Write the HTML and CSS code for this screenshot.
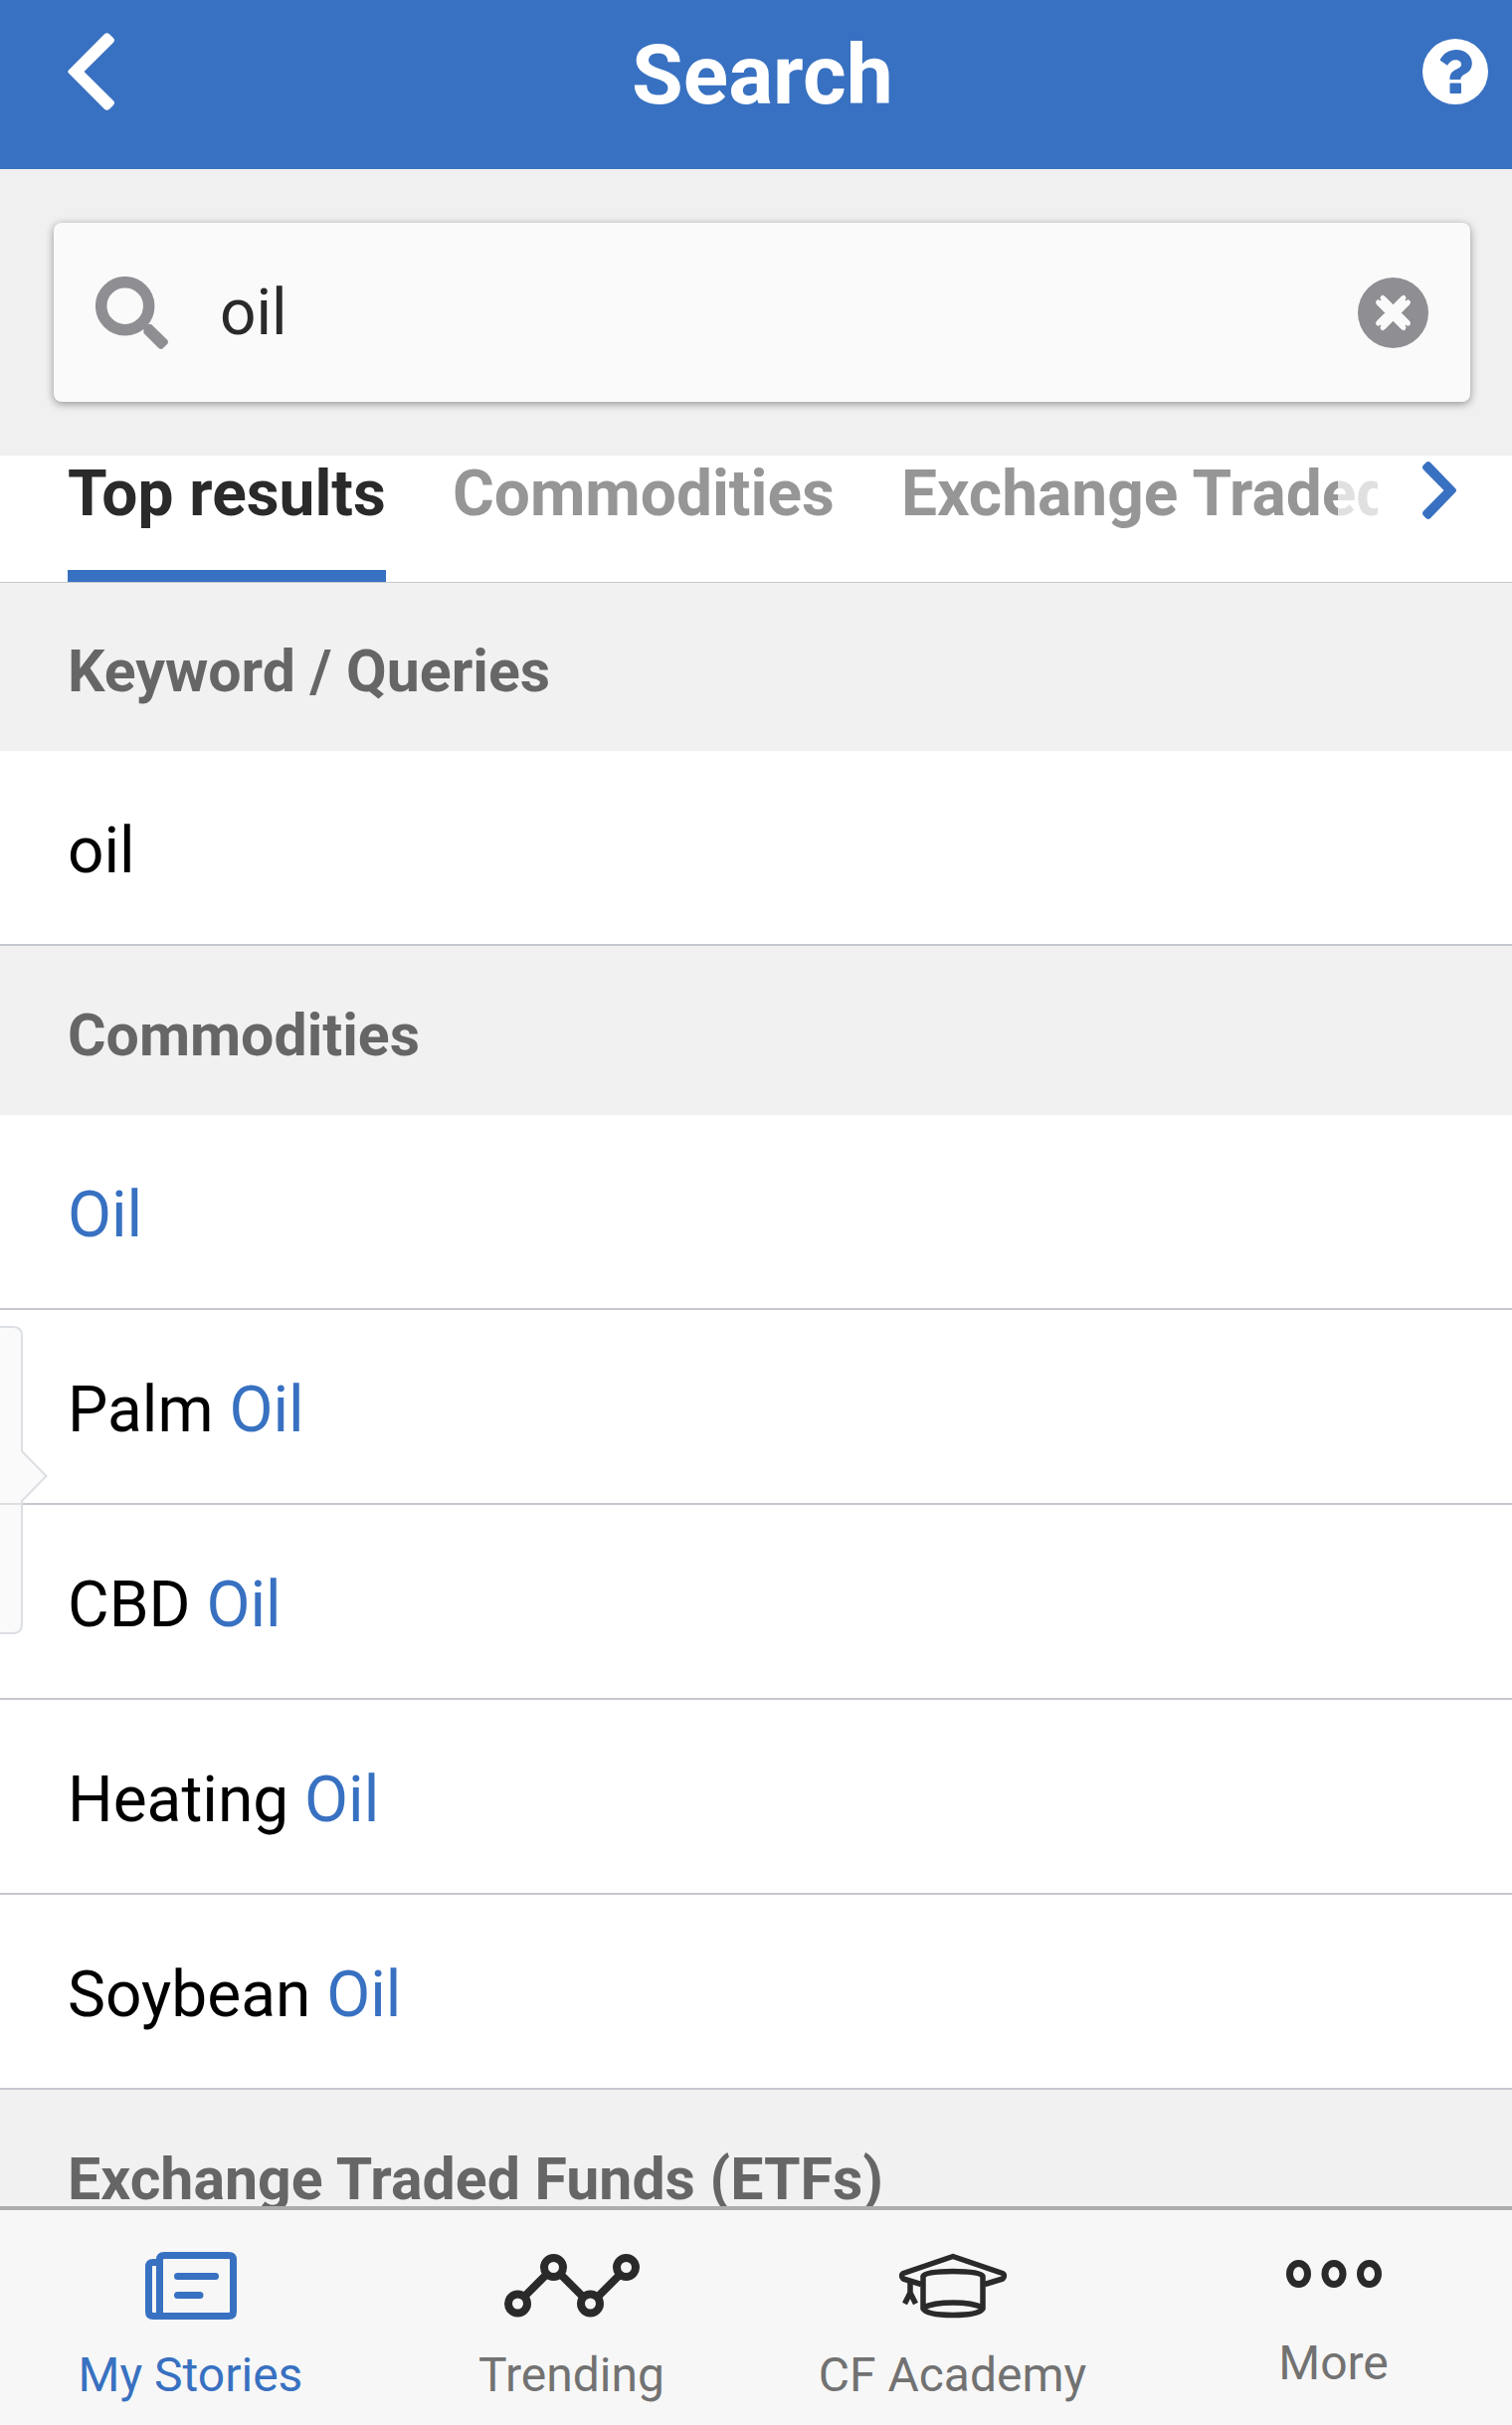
FILE: index.html
```html
<!DOCTYPE html>
<html lang="en">
<head>
    <meta charset="UTF-8">
    <meta name="viewport" content="width=device-width, initial-scale=1.0">
    <title>Search</title>
    <link rel="stylesheet" href="styles.css">
</head>
<body>
    <header class="header">
        <button class="icon-btn" aria-label="Back">
            <svg width="47" height="78" viewBox="0 0 47 78">
                <path d="M1 37.500 L37 1.300 Q39.500 -1 42 1.300 L46 5.300 Q48 7.500 46 9.700 L16.500 39 L46 68.300 Q48 70.500 46 72.700 L42 76.700 Q39.500 79 37 76.700 L1 40.500 Q-0.500 39 1 37.500 Z" fill="#fff"/>
            </svg>
        </button>
        <h1 class="header-title">Search</h1>
        <button class="icon-btn" aria-label="Help">
            <svg width="66" height="66" viewBox="0 0 66 66">
                <circle cx="33" cy="33" r="33" fill="#fff"/>
                <path d="M17.500 21.500 C21 14.500 26.500 11 34 11 C43 11 49.800 17 49.800 24.500 C49.800 30 47 33.200 43 35.300 C39.500 37.200 38.800 38.500 38.300 41 L27.500 41 C27.200 35.500 29.500 33 34 30.800 C37.500 29 39 28 39 25.700 C39 23 36.500 21.300 33.500 21.300 C29.800 21.300 28 22.800 25 26.800 Z" fill="#3871c1"/>
                <rect x="27.500" y="44.500" width="11.500" height="10.500" rx="1" fill="#3871c1"/>
            </svg>
        </button>
    </header>

    <form class="search" role="search">
        <label class="search-box">
            <svg width="73" height="73" viewBox="0 0 73 73" aria-hidden="true">
                <circle cx="29.700" cy="29.700" r="24" fill="none" stroke="#8f8e93" stroke-width="11.500"/>
                <path d="M48 50 Q48 48 51 48 L56 48 L72 63.500 Q74 66 72 68 L68 72 Q66 74 63.500 72 L48.500 57 Z" fill="#8f8e93"/>
            </svg>
            <input class="search-input" type="text" value="oil" aria-label="Search">
            <button class="icon-btn" type="reset" aria-label="Clear search">
                <svg width="71" height="71" viewBox="0 0 71 71">
                    <circle cx="35.500" cy="35.500" r="35.500" fill="#8f8e93"/>
                    <path d="M23 23 L48 48 M48 23 L23 48" stroke="#fafafa" stroke-width="11.500"/>
                    <path d="M25 20.500 L50.500 46 M46 20.500 L20.500 46 M20.500 25 L46 50.500 M50.500 25 L25 50.500" stroke="#fafafa" stroke-width="5" stroke-linecap="round"/>
                </svg>
            </button>
        </label>
    </form>

    <div class="tabs">
        <div class="tabs-list" role="tablist">
            <button class="tab active" role="tab" aria-selected="true">Top results</button>
            <button class="tab" role="tab" aria-selected="false">Commodities</button>
            <button class="tab" role="tab" aria-selected="false">Exchange Traded Funds (ETFs)</button>
        </div>
        <button class="icon-btn tabs-next" aria-label="More tabs">
            <svg width="34" height="58" viewBox="0 0 34 58">
                <path d="M33.500 27.500 L8 1 Q5.800 -0.800 3.600 1 L0.800 3.800 Q-0.800 6 0.800 8 L21.500 29 L0.800 50 Q-0.800 52 0.800 54.200 L3.600 57 Q5.800 58.800 8 57 L33.500 30.500 Q34.500 29 33.500 27.500 Z" fill="#3871c1"/>
            </svg>
        </button>
    </div>

    <main class="results">
        <h2 class="section-title">Keyword / Queries</h2>
        <ul class="list">
            <li><a class="row" href="#">oil</a></li>
        </ul>

        <h2 class="section-title">Commodities</h2>
        <ul class="list">
            <li><a class="row" href="#"><span class="match">Oil</span></a></li>
            <li class="with-callout">
                <a class="row" href="#">Palm <span class="match">Oil</span></a>
                <svg class="callout" width="50" height="310" viewBox="0 0 50 310" aria-hidden="true">
                    <path d="M-10 1 H13 Q22 1 22 10 V126 L46.500 151 L22 176 V299 Q22 309 13 309 H-10 Z" fill="#f5f5f6" fill-opacity="0.500" stroke="#dcdfe3" stroke-width="2"/>
                </svg>
            </li>
            <li><a class="row" href="#">CBD <span class="match">Oil</span></a></li>
            <li><a class="row" href="#">Heating <span class="match">Oil</span></a></li>
            <li><a class="row" href="#">Soybean <span class="match">Oil</span></a></li>
        </ul>

        <h2 class="section-title">Exchange Traded Funds (ETFs)</h2>
    </main>

    <nav class="bottom-nav">
        <a class="nav-item active" href="#">
            <svg width="92" height="72" viewBox="0 0 92 72" fill="none" stroke="#3871c1" stroke-width="7" stroke-linecap="round">
                <path d="M14.500 66.500 V10 Q14.500 5.500 19 5.500 H84 Q88.500 5.500 88.500 10 V62 Q88.500 66.500 84 66.500 H8 Q3.500 66.500 3.500 62 V17 Q3.500 12.500 8 12.500 H12"/>
                <path d="M32.500 26.500 H70.500 M32.500 45.500 H55"/>
            </svg>
            <span>My Stories</span>
        </a>
        <a class="nav-item" href="#">
            <svg width="136" height="72" viewBox="0 0 136 72" fill="none" stroke="#2a2a2a" stroke-width="8">
                <path d="M20 47 L42 25 M57 25 L79 47 M94 47 L116 25"/>
                <circle cx="13.500" cy="54" r="9.500"/>
                <circle cx="49.500" cy="17.500" r="9.500"/>
                <circle cx="86.500" cy="54" r="9.500"/>
                <circle cx="122.500" cy="17.500" r="9.500"/>
            </svg>
            <span>Trending</span>
        </a>
        <a class="nav-item" href="#">
            <svg width="108" height="72" viewBox="0 -4 108 72" fill="none" stroke="#2a2a2a" stroke-width="5.500" stroke-linejoin="round">
                <path d="M22 30.500 L4 25 Q1 21.500 4 19.500 L54 2.500 L104 19.500 Q107 21.500 104 25 L86 30.500"/>
                <path d="M24 55 V22.500 Q27 17.500 54 17.500 Q81 17.500 84 22.500 V55 Q80 61.500 54 61.500 Q28 61.500 24 55 Z"/>
                <path d="M24 54 Q34 49 54 49 Q74 49 84 54"/>
                <path d="M11 27 V39 L5.500 50 M11 39 L16.500 50"/>
            </svg>
            <span>CF Academy</span>
        </a>
        <a class="nav-item" href="#">
            <svg width="96" height="60" viewBox="0 0 96 60" fill="none" stroke="#2a2a2a" stroke-width="7">
                <ellipse cx="12.500" cy="24" rx="9" ry="10.500"/>
                <ellipse cx="48" cy="24" rx="9" ry="10.500"/>
                <ellipse cx="83.500" cy="24" rx="9" ry="10.500"/>
            </svg>
            <span>More</span>
        </a>
    </nav>
</body>
</html>
```
FILE: styles.css
```css
* {
    margin: 0;
    padding: 0;
    box-sizing: border-box;
}

body {
    height: 100vh;
    display: flex;
    flex-direction: column;
    background: #fff;
    color: #000;
    font-family: Roboto, sans-serif;
    overflow: hidden;
}

svg {
    display: block;
}

a {
    color: inherit;
    text-decoration: none;
}

.icon-btn {
    flex: none;
    background: none;
    border: none;
    cursor: pointer;
}

/* Header */
.header {
    flex: none;
    display: flex;
    align-items: center;
    padding: 22px 24px 48px 68px;
    background: #3871c1;
}

.header-title {
    flex: 1;
    padding: 8px 12px 0 0;
    color: #fff;
    font-size: 84px;
    font-weight: 700;
    line-height: 92px;
    text-align: center;
}

/* Search field */
.search {
    flex: none;
    padding: 54px 42px 54px 54px;
    background: #f0f0f0;
}

.search-box {
    display: flex;
    align-items: center;
    height: 180px;
    padding: 0 42px;
    background: #fafafa;
    border-radius: 8px;
    box-shadow: 0 2px 8px rgba(0, 0, 0, 0.4);
}

.search-input {
    flex: 1;
    min-width: 0;
    margin-left: 52px;
    padding-top: 2px;
    background: none;
    border: none;
    outline: none;
    color: #2a2a2a;
    font-family: inherit;
    font-size: 64px;
    line-height: 76px;
}

/* Tabs */
.tabs {
    flex: none;
    position: relative;
    z-index: 1;
    display: flex;
    align-items: flex-start;
    padding: 0 56px 0 68px;
    background: #fff;
    box-shadow: 0 1px 0 #c5c8ce;
}

.tabs-list {
    flex: 1;
    position: relative;
    display: flex;
    gap: 67px;
    min-width: 0;
    overflow: hidden;
}

.tabs-list::after {
    content: "";
    position: absolute;
    top: 0;
    right: 0;
    bottom: 0;
    width: 40px;
    background: rgba(255, 255, 255, 0.7);
}

.tab {
    flex: none;
    padding: 1px 0 38px;
    background: none;
    border: none;
    border-bottom: 12px solid transparent;
    color: #969696;
    font-family: inherit;
    font-size: 64px;
    font-weight: 700;
    line-height: 76px;
    white-space: nowrap;
    cursor: pointer;
}

.tab.active {
    color: #2a2a2a;
    border-bottom-color: #3871c1;
}

.tabs-next {
    padding: 6px 0 0 45px;
}

/* Results */
.results {
    flex: 1;
    min-height: 0;
    overflow: hidden;
}

.section-title {
    padding: 54px 68px 44px;
    background: #f1f1f1;
    color: #666;
    font-size: 59px;
    font-weight: 700;
    line-height: 72px;
}

.list {
    list-style: none;
}

.row {
    display: block;
    padding: 63px 68px 55px;
    border-bottom: 2px solid #c5c8ce;
    font-size: 64px;
    line-height: 76px;
}

.match {
    color: #3871c1;
}

.with-callout {
    position: relative;
}

.callout {
    position: absolute;
    top: 16px;
    left: 0;
}

/* Bottom navigation */
.bottom-nav {
    flex: none;
    display: grid;
    grid-template-columns: repeat(4, 1fr);
    column-gap: 24px;
    padding: 40px 0 22px 12px;
    background: #f7f7f7;
    border-top: 4px solid #adadad;
}

.nav-item {
    display: flex;
    flex-direction: column;
    align-items: center;
    gap: 26px;
    color: #727272;
    font-size: 48px;
    line-height: 56px;
}

.nav-item.active {
    color: #3871c1;
}
```
